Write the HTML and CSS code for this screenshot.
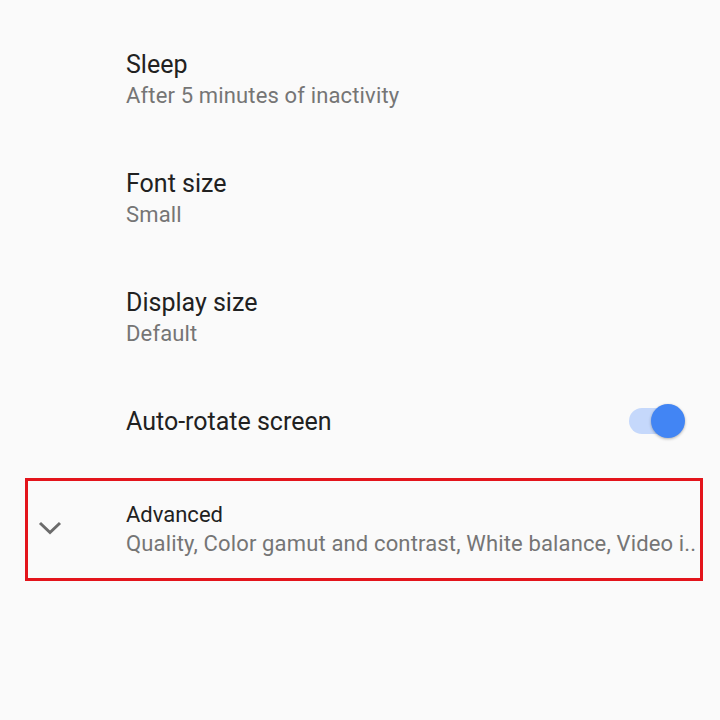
FILE: index.html
```html
<!DOCTYPE HTML>
<html>
<head>
	<meta http-equiv="Content-Type" content="text/html; charset=utf-8">
	<meta name="viewport" content="width=device-width, initial-scale=1">
	<title>Display</title>
	<link rel="stylesheet" href="styles.css">
</head>
<body>
	<div class="list">
		<div class="row">
			<div class="text">
				<div class="title">Sleep</div>
				<div class="summary">After 5 minutes of inactivity</div>
			</div>
		</div>
		<div class="row">
			<div class="text">
				<div class="title">Font size</div>
				<div class="summary">Small</div>
			</div>
		</div>
		<div class="row">
			<div class="text">
				<div class="title">Display size</div>
				<div class="summary">Default</div>
			</div>
		</div>
		<div class="row row-switch">
			<div class="text">
				<div class="title">Auto-rotate screen</div>
			</div>
			<div class="switch on">
				<span class="track"></span>
				<span class="thumb"></span>
			</div>
		</div>
		<div class="advanced">
			<div class="icon">
				<svg width="24" height="14" viewBox="0 0 24 14">
					<path d="M2 2 L12 11.5 L22 2" fill="none" stroke="#6b6b6b" stroke-width="3"/>
				</svg>
			</div>
			<div class="text">
				<div class="title small">Advanced</div>
				<div class="summary">Quality, Color gamut and contrast, White balance, Video i..</div>
			</div>
		</div>
	</div>
</body>
</html>
```

FILE: styles.css
```css
body{
	margin: 0;
	background-color: #fafafa;
	font-family: Roboto, "Noto Sans", sans-serif;
}
.list{
	padding-top: 20px;
}
.row{
	height: 119px;
	display: flex;
	align-items: center;
	padding-left: 126px;
	padding-right: 34px;
}
.row-switch{
	height: 89px;
	justify-content: space-between;
}
.title{
	font-size: 25px;
	line-height: 33px;
	color: #212121;
}
.title.small{
	font-size: 22px;
	line-height: 28px;
}
.summary{
	font-size: 22px;
	line-height: 30px;
	color: #757575;
	white-space: nowrap;
	letter-spacing: 0.15px;
}

/* toggle */
.switch{
	position: relative;
	width: 58px;
	height: 36px;
	margin-bottom: 2px;
}
.switch .track{
	position: absolute;
	left: 1px;
	top: 5px;
	width: 52px;
	height: 26px;
	border-radius: 13px;
	background-color: #c5d8fb;
}
.switch .thumb{
	position: absolute;
	right: 1px;
	top: 1px;
	width: 34px;
	height: 34px;
	border-radius: 50%;
	background-color: #4285f4;
	box-shadow: 0 1px 3px rgba(0,0,0,0.3);
}

.advanced{
	margin: 12px 17px 0 25px;
	height: 97px;
	border: 3px solid #e3141b;
	display: flex;
	align-items: center;
}
.advanced .icon{
	width: 98px;
	padding-left: 10px;
	padding-bottom: 3px;
	box-sizing: border-box;
	display: flex;
}
```
